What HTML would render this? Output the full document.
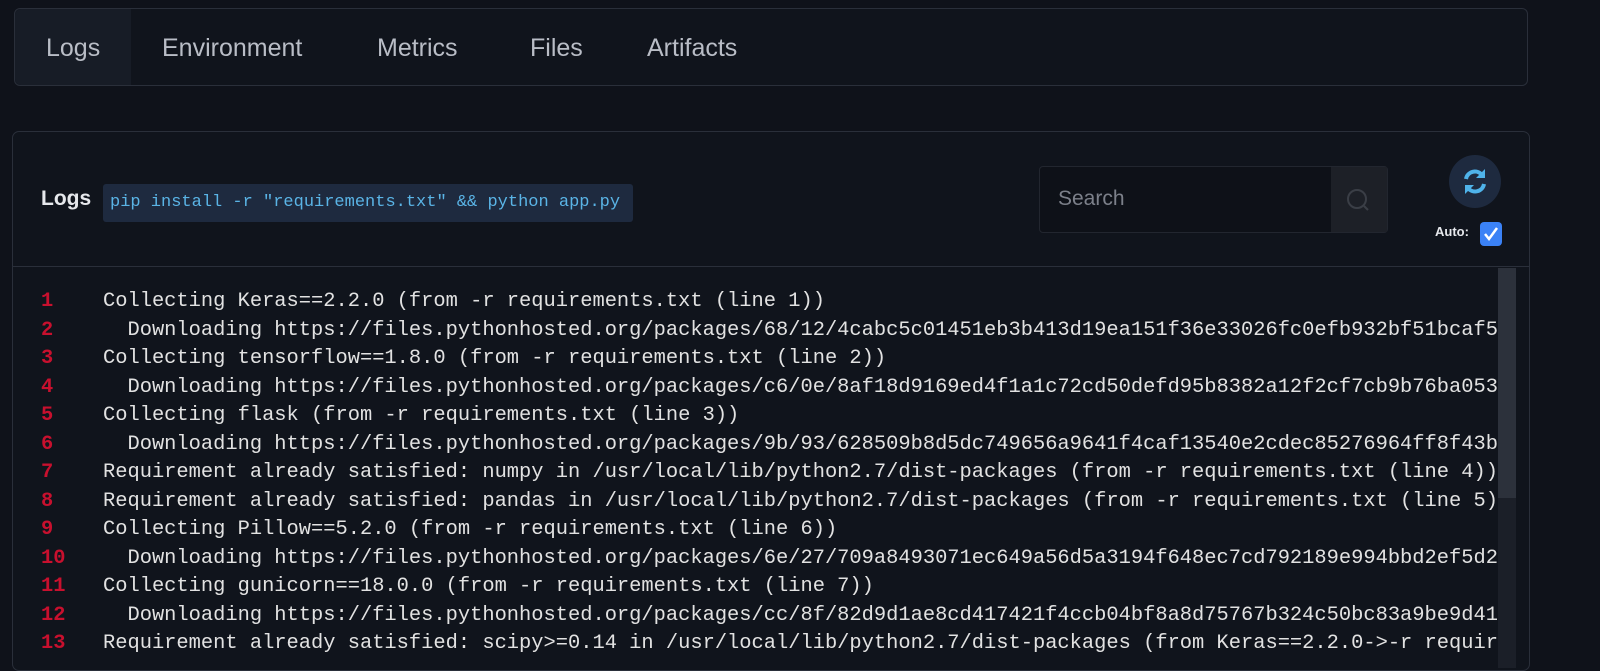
<!DOCTYPE html>
<html><head><meta charset="utf-8"><style>
*{margin:0;padding:0;box-sizing:border-box}
body{width:1600px;height:657px;background:#0f121a;overflow:hidden;font-family:"Liberation Sans",sans-serif;position:relative}
.tabs{position:absolute;left:14px;top:8px;width:1514px;height:78px;border:1px solid #2a2f3a;border-radius:6px;background:#10141c}
.tab{position:absolute;top:0;height:76px;line-height:78px;font-size:25px;color:#b9bdc6}
.tab.act{background:#171c26;border-radius:6px 0 0 6px}
.panel{position:absolute;left:12px;top:131px;width:1518px;height:540px;border:1px solid #2a2f3a;border-radius:7px;background:#10141c;overflow:hidden}
.hdr{position:absolute;left:0;top:0;width:100%;height:135px;border-bottom:1px solid #2a2f3a}
.lbl{position:absolute;left:28px;top:55px;font-size:21px;font-weight:bold;color:#e6e8ec}
.chip{position:absolute;left:90px;top:52px;width:530px;height:38px;background:#1e2a3f;border-radius:3px;font-family:"Liberation Mono",monospace;font-size:17px;color:#5ab4e6;line-height:38px;padding-left:7px;white-space:pre}
.search{position:absolute;left:1026px;top:34px;width:349px;height:67px;border:1px solid #22262f;border-radius:4px;background:#0e1118}
.search span{position:absolute;left:18px;top:20px;font-size:21px;color:#7c808a}
.sbtn{position:absolute;right:0;top:0;width:56px;height:65px;background:#1d2027}
.ref{position:absolute;left:1436px;top:23px;width:52px;height:53px;border-radius:50%;background:#1e2a3f}
.auto{position:absolute;left:1422px;top:92px;font-size:13px;font-weight:bold;color:#e6e8ec}
.cb{position:absolute;left:1467px;top:90px;width:22px;height:24px;border-radius:4px;background:#3b82f6}
.logs{position:absolute;left:0;top:136px;width:1485px;height:400px;font-family:"Liberation Mono",monospace;font-size:20.4px;color:#e2e2e2;white-space:pre;overflow:hidden}
.ln{position:absolute;left:0;height:28.5px;line-height:28.5px;width:2000px}
.ln b{display:inline-block;width:90px;padding-left:28px;color:#c8102e;font-weight:bold}
.sb{position:absolute;left:1485px;top:136px;width:18px;height:400px;background:#1b1f28}
.th{position:absolute;left:1485px;top:136px;width:18px;height:230px;background:#2c313b}
</style></head><body>
<div class="tabs">
<div class="tab act" style="left:0;width:116px;padding-left:31px">Logs</div>
<div class="tab" style="left:147px">Environment</div>
<div class="tab" style="left:362px">Metrics</div>
<div class="tab" style="left:515px">Files</div>
<div class="tab" style="left:632px">Artifacts</div>
</div>
<div class="panel">
<div class="hdr">
<div class="lbl">Logs</div>
<div class="chip">pip install -r "requirements.txt" &amp;&amp; python app.py</div>
<div class="search"><span>Search</span><div class="sbtn"><svg width="56" height="65"><circle cx="26" cy="32" r="9" fill="none" stroke="#3a3e46" stroke-width="2"/><line x1="33" y1="39" x2="37" y2="43" stroke="#3a3e46" stroke-width="2"/></svg></div></div>
<div class="ref"><svg width="52" height="53" viewBox="0 0 52 53"><path d="M17 24a9 9 0 0 1 16-4" fill="none" stroke="#4fb3ea" stroke-width="4"/><path d="M36 14v9h-9z" fill="#4fb3ea"/><path d="M35 29a9 9 0 0 1-16 4" fill="none" stroke="#4fb3ea" stroke-width="4"/><path d="M16 39v-9h9z" fill="#4fb3ea"/></svg></div>
<div class="auto">Auto:</div>
<div class="cb"><svg width="22" height="24"><path d="M5 12l4 5 8-11" fill="none" stroke="#fff" stroke-width="2.5"/></svg></div>
</div>
<div class="logs">
<div class="ln" style="top:20px"><b>1</b>Collecting Keras==2.2.0 (from -r requirements.txt (line 1))</div>
<div class="ln" style="top:48.5px"><b>2</b>  Downloading https://files.pythonhosted.org/packages/68/12/4cabc5c01451eb3b413d19ea151f36e33026fc0efb932bf51bcaf54acbf5/Keras</div>
<div class="ln" style="top:77px"><b>3</b>Collecting tensorflow==1.8.0 (from -r requirements.txt (line 2))</div>
<div class="ln" style="top:105.5px"><b>4</b>  Downloading https://files.pythonhosted.org/packages/c6/0e/8af18d9169ed4f1a1c72cd50defd95b8382a12f2cf7cb9b76ba053d</div>
<div class="ln" style="top:134px"><b>5</b>Collecting flask (from -r requirements.txt (line 3))</div>
<div class="ln" style="top:162.5px"><b>6</b>  Downloading https://files.pythonhosted.org/packages/9b/93/628509b8d5dc749656a9641f4caf13540e2cdec85276964ff8f43bb</div>
<div class="ln" style="top:191px"><b>7</b>Requirement already satisfied: numpy in /usr/local/lib/python2.7/dist-packages (from -r requirements.txt (line 4))</div>
<div class="ln" style="top:219.5px"><b>8</b>Requirement already satisfied: pandas in /usr/local/lib/python2.7/dist-packages (from -r requirements.txt (line 5))</div>
<div class="ln" style="top:248px"><b>9</b>Collecting Pillow==5.2.0 (from -r requirements.txt (line 6))</div>
<div class="ln" style="top:276.5px"><b>10</b>  Downloading https://files.pythonhosted.org/packages/6e/27/709a8493071ec649a56d5a3194f648ec7cd792189e994bbd2ef5d28</div>
<div class="ln" style="top:305px"><b>11</b>Collecting gunicorn==18.0.0 (from -r requirements.txt (line 7))</div>
<div class="ln" style="top:333.5px"><b>12</b>  Downloading https://files.pythonhosted.org/packages/cc/8f/82d9d1ae8cd417421f4ccb04bf8a8d75767b324c50bc83a9be9d412</div>
<div class="ln" style="top:362px"><b>13</b>Requirement already satisfied: scipy>=0.14 in /usr/local/lib/python2.7/dist-packages (from Keras==2.2.0->-r requirements</div>
</div>
<div class="sb"></div><div class="th"></div>
</div>
</body></html>
